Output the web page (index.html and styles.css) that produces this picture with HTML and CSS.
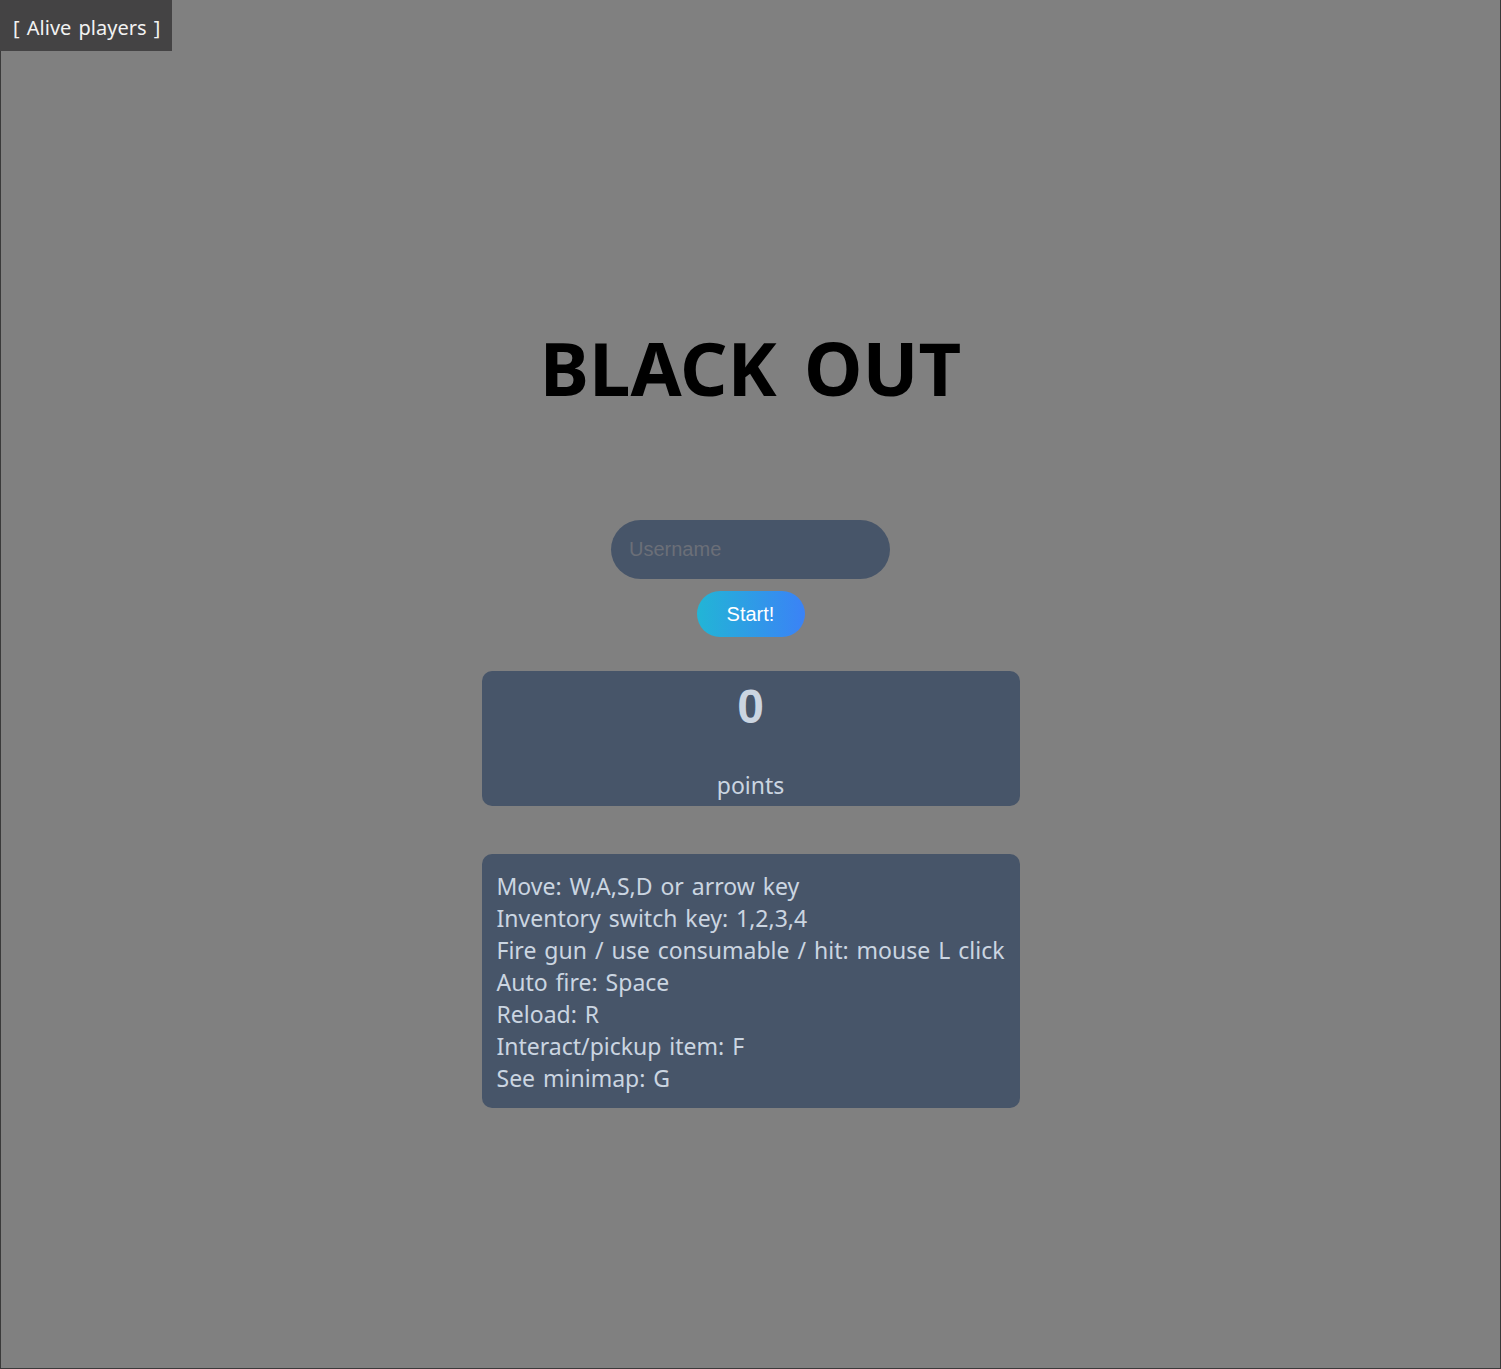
FILE: index.html
```html
<!DOCTYPE html>
<html>
<head>
<meta charset="utf-8">
<link rel="stylesheet" href="styles.css">
</head>
<body>
<div class="screen">
  <div class="alive">[ Alive players ]</div>
  <main class="menu">
    <h1 class="title">BLACK OUT</h1>
    <input class="username" type="text" placeholder="Username">
    <button class="start">Start!</button>
    <section class="score">
      <div class="score-value">0</div>
      <div class="score-label">points</div>
    </section>
    <section class="help">
      <div>Move: W,A,S,D or arrow key</div>
      <div>Inventory switch key: 1,2,3,4</div>
      <div>Fire gun / use consumable / hit: mouse L click</div>
      <div>Auto fire: Space</div>
      <div>Reload: R</div>
      <div>Interact/pickup item: F</div>
      <div>See minimap: G</div>
    </section>
  </main>
</div>
</body>
</html>
```
FILE: styles.css
```css
html, body {
  margin: 0;
  padding: 0;
}
body {
  font-family: "Noto Sans", "Noto Sans CJK KR", sans-serif;
  background: #808080;
}
.screen {
  position: relative;
  box-sizing: border-box;
  width: 1501px;
  height: 1369px;
  background: #808080;
  border: 1px solid #3a3a3a;
  border-top: none;
}
.alive {
  position: absolute;
  top: 0;
  left: -1px;
  width: 172px;
  height: 51px;
  box-sizing: border-box;
  background: #444344;
  color: #f2f2f2;
  font-size: 20px;
  word-spacing: 2px;
  line-height: 56px;
  padding-left: 13px;
}
.menu {
  display: flex;
  flex-direction: column;
  align-items: center;
  padding-top: 322px;
}
.title {
  margin: 0;
  font-size: 74px;
  word-spacing: 8px;
  line-height: 92px;
  font-weight: 700;
  color: #000;
}
.username {
  margin-top: 106px;
  width: 279px;
  height: 59px;
  box-sizing: border-box;
  border: none;
  border-radius: 30px;
  background: #475569;
  padding: 0 18px;
  font-family: "Liberation Sans", Arial, sans-serif;
  font-size: 20px;
  color: #cbd5e1;
  outline: none;
}
.username::placeholder {
  color: #6b6f78;
}
.start {
  margin-top: 12px;
  width: 108px;
  height: 46px;
  border: none;
  border-radius: 23px;
  background: linear-gradient(to right, #22b5d6, #3b82f6);
  color: #fff;
  font-family: "Liberation Sans", Arial, sans-serif;
  font-size: 20px;
  padding: 0;
}
.score {
  margin-top: 34px;
  width: 538px;
  height: 135px;
  box-sizing: border-box;
  background: #475569;
  border-radius: 10px;
  color: #cbd5e1;
  display: flex;
  flex-direction: column;
  align-items: center;
}
.score-value {
  font-family: "Liberation Sans", Arial, sans-serif;
  font-weight: 700;
  font-size: 48px;
  line-height: 56px;
  margin-top: 8px;
}
.score-label {
  font-size: 23px;
  word-spacing: 2px;
  line-height: 32px;
  margin-top: 34px;
}
.help {
  margin-top: 48px;
  width: 538px;
  box-sizing: border-box;
  background: #475569;
  border-radius: 10px;
  color: #cbd5e1;
  padding: 16px 15px 14px;
  font-size: 23px;
  word-spacing: 2px;
  line-height: 32px;
  white-space: nowrap;
}
```
